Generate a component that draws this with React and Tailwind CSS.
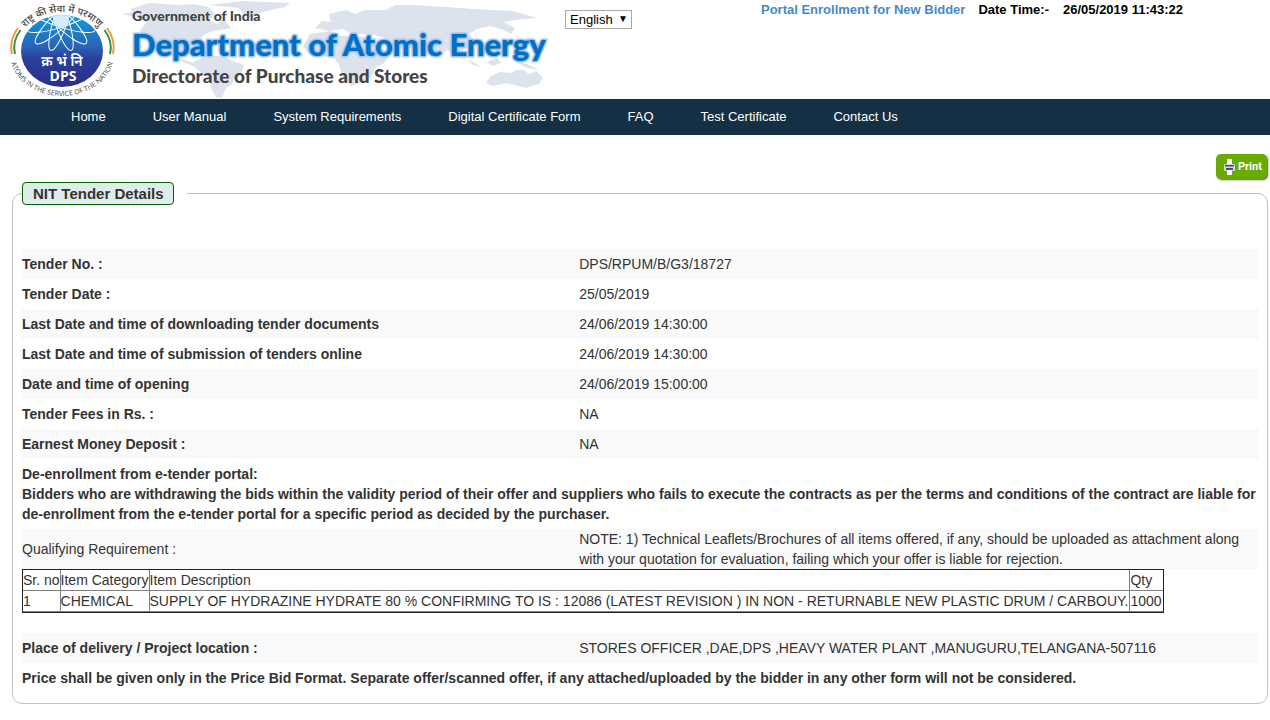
const rows = [
  ["Tender No. :", "DPS/RPUM/B/G3/18727"],
  ["Tender Date :", "25/05/2019"],
  ["Last Date and time of downloading tender documents", "24/06/2019 14:30:00"],
  ["Last Date and time of submission of tenders online", "24/06/2019 14:30:00"],
  ["Date and time of opening", "24/06/2019 15:00:00"],
  ["Tender Fees in Rs. :", "NA"],
  ["Earnest Money Deposit :", "NA"],
];

const navItems = [
  "Home",
  "User Manual",
  "System Requirements",
  "Digital Certificate Form",
  "FAQ",
  "Test Certificate",
  "Contact Us",
];

// DPS emblem: blue disc with atom orbits, tricolour side arcs, curved mottos
function Logo() {
  return (
    <svg width="110" height="98" viewBox="8 0 110 98" className="shrink-0" role="img" aria-label="DPS">
      <defs>
        <linearGradient id="disc" x1="0" y1="0" x2="0" y2="1">
          <stop offset="0" stopColor="#0f9be0" />
          <stop offset="0.45" stopColor="#2a62b5" />
          <stop offset="0.6" stopColor="#2b3f9c" />
          <stop offset="1" stopColor="#2a2f8c" />
        </linearGradient>
        <clipPath id="discClip"><ellipse cx="62" cy="51" rx="41" ry="36" /></clipPath>
        <path id="topArc" d="M25 28 A45 37 0 0 1 99 28" />
        <path id="bottomArc" d="M10 54 A52 42 0 0 0 114 54" />
      </defs>
      <ellipse cx="62" cy="51" rx="41" ry="36" fill="url(#disc)" />
      <g clipPath="url(#discClip)" fill="none" stroke="#fff" strokeWidth="1">
        <ellipse cx="61" cy="19" rx="7" ry="33" transform="rotate(18 61 19)" />
        <ellipse cx="61" cy="19" rx="7" ry="33" transform="rotate(-18 61 19)" />
        <ellipse cx="61" cy="19" rx="8" ry="35" transform="rotate(46 61 19)" />
        <ellipse cx="61" cy="19" rx="8" ry="35" transform="rotate(-46 61 19)" />
        <ellipse cx="61" cy="19" rx="8" ry="36" transform="rotate(72 61 19)" />
        <ellipse cx="61" cy="19" rx="8" ry="36" transform="rotate(-72 61 19)" />
        <circle cx="61" cy="19" r="8" fill="#d3edfb" stroke="none" />
      </g>
      <g fill="none" strokeWidth="2">
        <path d="M18 28 Q9 40 12 54" stroke="#f19a3e" />
        <path d="M20.5 30 Q12 41 15 54" stroke="#2d9443" />
        <path d="M107 28 Q116 40 113 54" stroke="#f19a3e" />
        <path d="M104.5 30 Q113 41 110 54" stroke="#2d9443" />
      </g>
      <text fill="#444" fontSize="10" fontWeight="500" fontFamily="'Noto Sans Devanagari', 'Noto Sans', sans-serif">
        <textPath href="#topArc" startOffset="50%" textAnchor="middle">राष्ट्र की सेवा में परमाणु</textPath>
      </text>
      <text fill="#444" fontSize="7" fontWeight="500" fontFamily="'Open Sans', sans-serif">
        <textPath href="#bottomArc" startOffset="50%" textAnchor="middle">ATOMS IN THE SERVICE OF THE NATION</textPath>
      </text>
      <text x="62" y="66" textAnchor="middle" fill="#fff" fontSize="14" fontWeight="600" fontFamily="'Noto Sans Devanagari', 'Noto Sans', sans-serif">क्र भं नि</text>
      <text x="63" y="81" textAnchor="middle" fill="#fff" fontSize="14" fontWeight="700" fontFamily="'Open Sans', sans-serif">DPS</text>
    </svg>
  );
}

function WorldMap() {
  return (
    <svg width="430" height="98" viewBox="115 0 430 98" className="absolute inset-0" aria-hidden="true">
      <g fill="#dde3ec">
        <path d="M119 14 L130 12 L127 9 L147 3 L173 5 L190 4 L205 7 L212 14 L206 20 L214 24 L220 18 L228 28 L218 30 L210 31 L200 35 L196 44 L188 46 L180 50 L176 58 L190 63 L192 67 L180 62 L166 52 L152 45 L141 38 L137 30 L144 22 L132 17Z" />
        <path d="M206 5 L240 1 L287 3 L282 7 L268 10 L257 13 L249 18 L240 14 L236 8Z" />
        <path d="M192 61 L207 55 L222 57 L230 61 L241 65 L239 73 L232 78 L229 84 L223 88 L219 98 L213 97 L208 88 L207 78 L194 70 L189 64Z" />
        <path d="M312 28 L319 21 L328 22 L326 14 L343 10 L352 14 L362 10 L382 10 L393 5 L412 5 L443 7 L470 9 L510 11 L534 18 L518 19 L500 22 L512 28 L508 34 L498 29 L487 26 L474 29 L466 34 L473 42 L464 48 L456 52 L462 58 L452 54 L444 50 L434 58 L426 48 L414 46 L402 50 L390 46 L382 38 L368 34 L350 34 L340 29 L326 31Z" />
        <path d="M307 34 L328 31 L338 36 L363 37 L376 46 L387 55 L381 63 L373 67 L369 76 L360 82 L348 86 L340 78 L336 64 L330 57 L307 55 L300 46Z" />
        <path d="M483 83 L488 76 L497 72 L508 73 L514 70 L520 70 L526 74 L533 71 L540 78 L536 84 L523 88 L512 85 L503 83 L490 86Z" />
        <path d="M464 59 L472 63 L478 67 L470 65Z M484 62 L494 58 L498 63 L490 66Z M512 61 L524 64 L536 70 L524 68Z" />
      </g>
    </svg>
  );
}

function Header() {
  return (
    <header className="flex h-[99px] items-start pl-2">
      <Logo />
      <div className="relative h-[98px] w-[430px] shrink-0">
        <WorldMap />
        <div className="relative flex flex-col whitespace-nowrap pl-[14px] pt-2 font-['Lato_Black','Lato',sans-serif] font-black text-[#444]">
          <p className="text-[14px] leading-4">Government of India</p>
          <h1 className="mt-1 text-[31px] leading-8 text-[#0070c4] [paint-order:stroke_fill] [-webkit-text-stroke:3px_#bdd5f3] [text-shadow:0_0_3px_#5f93d6]">
            Department of Atomic Energy
          </h1>
          <p className="mt-1 text-[19px] leading-6">Directorate of Purchase and Stores</p>
        </div>
      </div>
      <div className="relative ml-[17px] mt-[10px] shrink-0">
        <select aria-label="Language" className="block h-[19px] w-[67px] appearance-none rounded-none border border-[#a9a9a9] bg-white pl-1 text-[13px] leading-4 text-black">
          <option>English</option>
        </select>
        <span className="pointer-events-none absolute right-1 top-[3px] text-[10px] leading-3 text-black">▼</span>
      </div>
      <div className="ml-[129px] flex whitespace-nowrap text-[13px] font-bold leading-5 text-black">
        <a href="#" className="text-[#428bca]">Portal Enrollment for New Bidder</a>
        <span className="ml-[13px]">Date Time:-</span>
        <time className="ml-[14px]">26/05/2019 11:43:22</time>
      </div>
    </header>
  );
}

function PrintButton() {
  return (
    <button type="button" className="flex h-[25px] w-[51px] items-center gap-[3px] rounded-[5px] bg-[#69ab00] pl-2 font-['Roboto',sans-serif] text-[11px] font-bold text-white shadow-[1px_1px_2px_#555]">
      <svg width="11" height="16" viewBox="0 0 11 16" className="shrink-0" aria-hidden="true">
        <path d="M3 0h5v6H3z" fill="#fff" />
        <rect x="0" y="5" width="11" height="7" rx="1.5" fill="#d5d8e4" />
        <path d="M1 6h9v1.5H1zM2 9h7v2H2z" fill="#4a4c60" />
        <path d="M3 11h5v5H3z" fill="#f5f5f5" />
      </svg>
      Print
    </button>
  );
}

function ItemTable() {
  const cell = "border-b border-l border-[#808080] p-0 text-left font-normal first:border-l-0 nth-[n+3]:pr-px";
  return (
    <table className="border-separate border-spacing-0 whitespace-nowrap border border-[#222] bg-white">
      <thead>
        <tr>
          <th className={cell}>Sr. no</th>
          <th className={cell}>Item Category</th>
          <th className={cell}>Item Description</th>
          <th className={cell}>Qty</th>
        </tr>
      </thead>
      <tbody>
        <tr>
          <td className={cell}>1</td>
          <td className={cell}>CHEMICAL</td>
          <td className={cell}>SUPPLY OF HYDRAZINE HYDRATE 80 % CONFIRMING TO IS : 12086 (LATEST REVISION ) IN NON - RETURNABLE NEW PLASTIC DRUM / CARBOUY.</td>
          <td className={cell}>1000</td>
        </tr>
      </tbody>
    </table>
  );
}

export default function App() {
  return (
    <div className="bg-white pb-4 font-['Liberation_Sans',Arial,sans-serif] text-[14px] leading-5 text-[#333]">
      <Header />
      <nav className="flex h-9 items-center gap-[47px] whitespace-nowrap bg-[#143044] pl-[71px] text-[13px] text-white">
        {navItems.map((n) => <a key={n} href="#">{n}</a>)}
      </nav>
      <main className="pl-3 pr-[2px] pt-[19px]">
        <div className="flex justify-end pb-[3px] pr-px">
          <PrintButton />
        </div>
        <fieldset className="rounded-[10px] border border-[#c0c0c0] px-[9px] pb-[10px]">
          <legend className="pr-[13px]">
            <span className="block rounded-[4px] border border-[#006400] bg-[#e0ecec] pl-[10px] pr-[9px] text-[15px] font-bold leading-[21px]">
              NIT Tender Details
            </span>
          </legend>
          <table className="mt-11 w-full table-fixed border-collapse">
            <colgroup>
              <col className="w-[45%]" />
              <col />
            </colgroup>
            <tbody>
              {rows.map(([label, value]) => (
                <tr key={label} className="odd:bg-[#f9f9f9]">
                  <th scope="row" className="p-0 py-[5px] text-left font-bold">{label}</th>
                  <td className="py-[5px] pl-px">{value}</td>
                </tr>
              ))}
              <tr>
                <td colSpan={2} className="p-0 py-[5px] font-bold">
                  De-enrollment from e-tender portal:
                  <br />
                  Bidders who are withdrawing the bids within the validity period of their offer and suppliers who fails to execute the contracts as per the terms and conditions of the contract are liable for de-enrollment from the e-tender portal for a specific period as decided by the purchaser.
                </td>
              </tr>
              <tr className="bg-[#f9f9f9]">
                <th scope="row" className="p-0 text-left font-normal">Qualifying Requirement :</th>
                <td className="pl-px">
                  NOTE: 1) Technical Leaflets/Brochures of all items offered, if any, should be uploaded as attachment along with your quotation for evaluation, failing which your offer is liable for rejection.
                </td>
              </tr>
              <tr>
                <td colSpan={2} className="p-0 pb-5"><ItemTable /></td>
              </tr>
              <tr className="bg-[#f9f9f9]">
                <th scope="row" className="p-0 py-[5px] text-left font-bold">Place of delivery / Project location :</th>
                <td className="py-[5px] pl-px">STORES OFFICER ,DAE,DPS ,HEAVY WATER PLANT ,MANUGURU,TELANGANA-507116</td>
              </tr>
              <tr>
                <td colSpan={2} className="p-0 py-[5px] font-bold">
                  Price shall be given only in the Price Bid Format. Separate offer/scanned offer, if any attached/uploaded by the bidder in any other form will not be considered.
                </td>
              </tr>
            </tbody>
          </table>
        </fieldset>
      </main>
    </div>
  );
}
